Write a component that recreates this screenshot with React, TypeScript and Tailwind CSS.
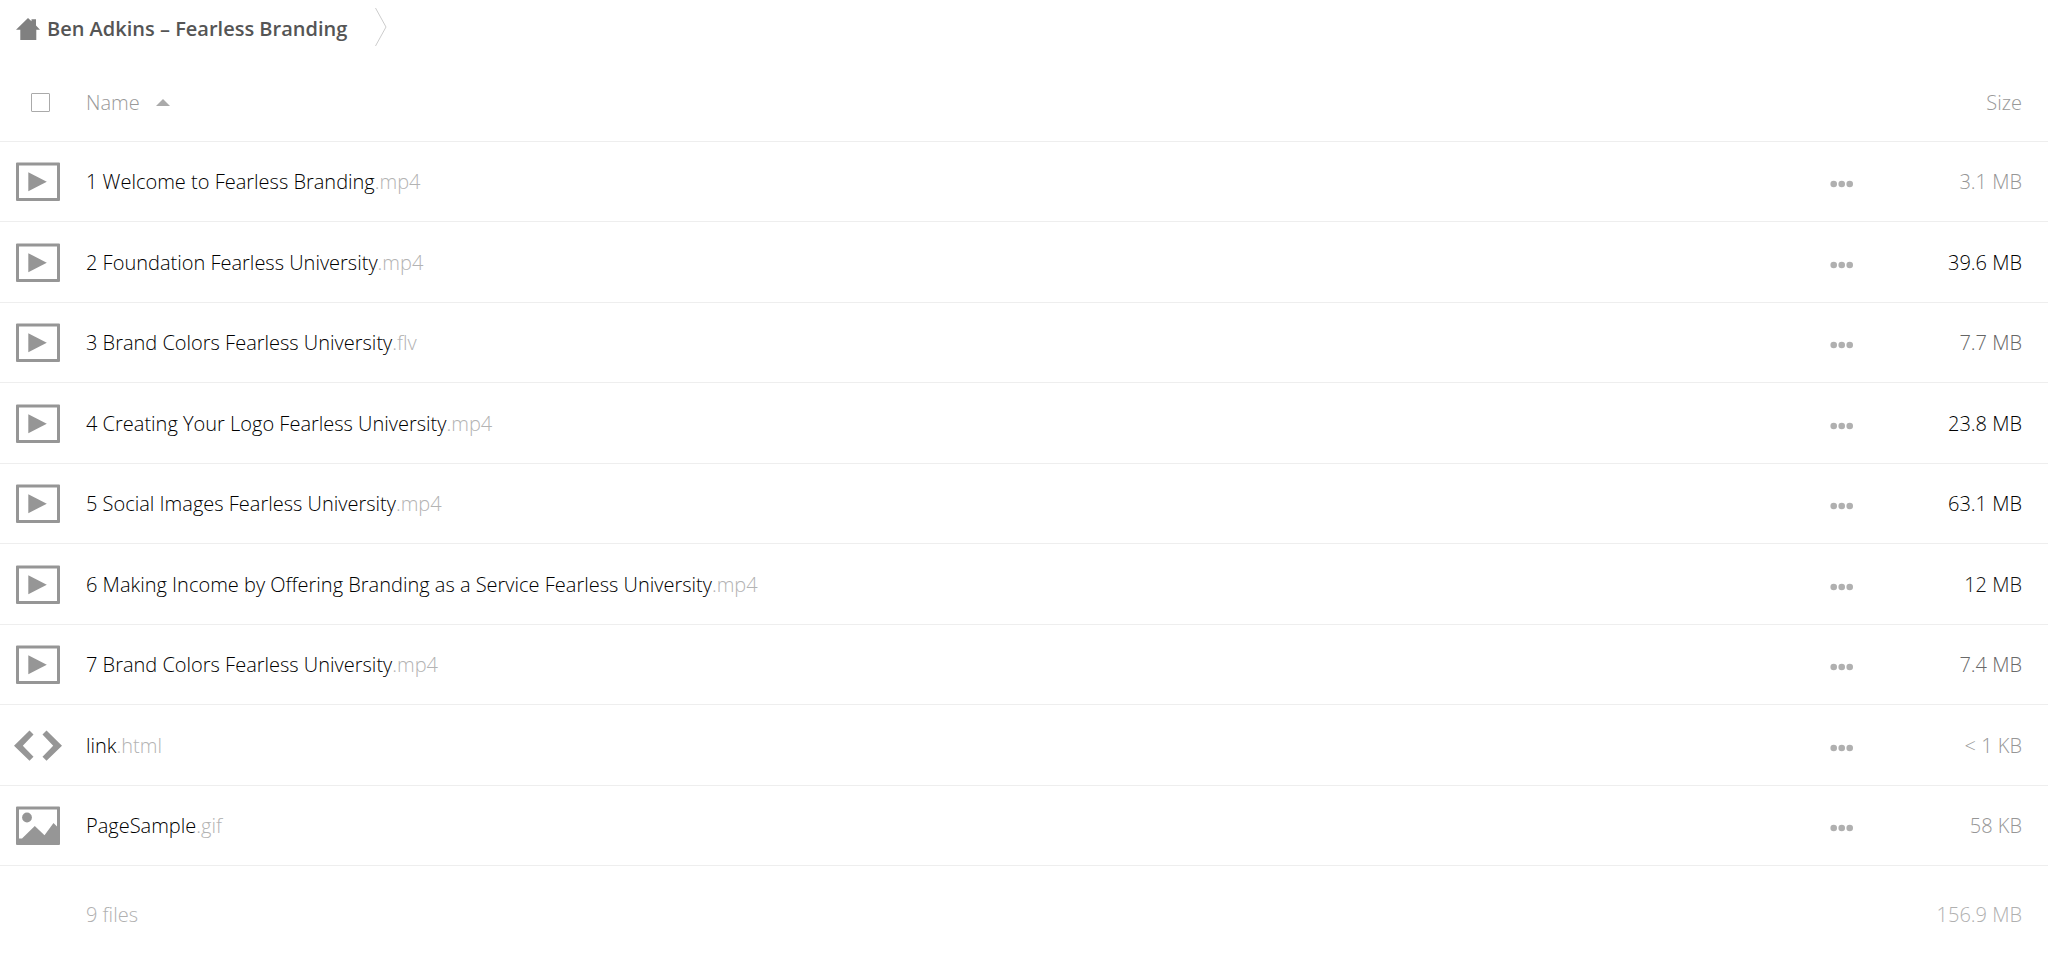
import { useState } from 'react';

type FileKind = 'video' | 'code' | 'image';

type FileEntry = {
  name: string;
  ext: string;
  size: string;
  sizeClass: string;
  kind: FileKind;
};

const files: FileEntry[] = [
  { name: '1 Welcome to Fearless Branding', ext: '.mp4', size: '3.1 MB', sizeClass: 'text-[#969696]', kind: 'video' },
  { name: '2 Foundation Fearless University', ext: '.mp4', size: '39.6 MB', sizeClass: 'text-black', kind: 'video' },
  { name: '3 Brand Colors Fearless University', ext: '.flv', size: '7.7 MB', sizeClass: 'text-[#656565]', kind: 'video' },
  { name: '4 Creating Your Logo Fearless University', ext: '.mp4', size: '23.8 MB', sizeClass: 'text-black', kind: 'video' },
  { name: '5 Social Images Fearless University', ext: '.mp4', size: '63.1 MB', sizeClass: 'text-black', kind: 'video' },
  { name: '6 Making Income by Offering Branding as a Service Fearless University', ext: '.mp4', size: '12 MB', sizeClass: 'text-[#101010]', kind: 'video' },
  { name: '7 Brand Colors Fearless University', ext: '.mp4', size: '7.4 MB', sizeClass: 'text-[#696969]', kind: 'video' },
  { name: 'link', ext: '.html', size: '< 1 KB', sizeClass: 'text-[#969696]', kind: 'code' },
  { name: 'PageSample', ext: '.gif', size: '58 KB', sizeClass: 'text-[#969696]', kind: 'image' },
];

function FileIcon({ kind }: { kind: FileKind }) {
  return (
    <svg viewBox="0 0 48 40" fill="#969696" aria-hidden="true" className="h-10 w-12">
      {kind === 'code' ? (
        <>
          <path d="M15.5 4.5 19.5 8.5 8.8 19.7 19.5 30.7 15.5 34.8 0 19.7Z" />
          <path d="M32.5 4.5 28.5 8.5 39.2 19.7 28.5 30.7 32.5 34.8 48 19.7Z" />
        </>
      ) : (
        <path
          fillRule="evenodd"
          d="M3 .5H45a1 1 0 0 1 1 1V38a1 1 0 0 1-1 1H3a1 1 0 0 1-1-1V1.5a1 1 0 0 1 1-1ZM5 3.5V36H43V3.500Z"
        />
      )}
      {kind === 'video' && <path d="M14.3 10.2 32.8 19.7 14.3 29.2Z" />}
      {kind === 'image' && (
        <>
          <circle cx="13" cy="11.5" r="4.9" />
          <path d="M4 32.5H8L20.8 20 30.5 29.2 39.5 17 44 21.5V37H4Z" />
        </>
      )}
    </svg>
  );
}

function HomeIcon() {
  return (
    <svg viewBox="0 0 24 22" fill="#808080" aria-hidden="true" className="h-[22px] w-6">
      <path d="M12 0 15.5 3.2V1.2H20V7.5L24 11.7H20.3V22H4.3V11.7H0Z" />
    </svg>
  );
}

export default function App() {
  const [selected, setSelected] = useState(false);

  return (
    <main className="w-full bg-white font-['Open_Sans',sans-serif] text-[20px] leading-7 font-light text-black">
      <nav aria-label="Breadcrumb" className="flex h-[61px] items-start pt-2 pl-4">
        <a href="#" className="flex h-[42px] items-center gap-[7px] font-semibold text-[#555]">
          <HomeIcon />
          <span>Ben Adkins – Fearless Branding</span>
        </a>
        <svg viewBox="0 0 12 38" fill="none" stroke="#ccc" aria-hidden="true" className="ml-7 h-[38px] w-3">
          <path d="M.5 0 11 19 .5 38" />
        </svg>
      </nav>

      <table className="w-full table-fixed border-collapse">
        <colgroup>
          <col className="w-[86px]" />
          <col />
          <col className="w-[60px]" />
          <col className="w-[168px]" />
        </colgroup>
        <thead>
          <tr className="h-20 border-b border-[#eee] text-[#999]">
            <th className="pt-1 pl-[31px] text-left">
              <input
                type="checkbox"
                aria-label="Select all"
                checked={selected}
                onChange={(e) => setSelected(e.target.checked)}
                className="block size-[19px] appearance-none rounded-[1px] border border-[#aaa] checked:bg-[#aaa]"
              />
            </th>
            <th className="pt-1 text-left font-light">
              <button type="button" className="flex items-center gap-4">
                <span>Name</span>
                <svg viewBox="0 0 14 7" fill="#aaa" aria-hidden="true" className="h-[7px] w-[14px]">
                  <path d="M7 0 14 7H0Z" />
                </svg>
              </button>
            </th>
            <th />
            <th className="pt-1 pr-[26px] text-right font-light">
              <button type="button">Size</button>
            </th>
          </tr>
        </thead>
        <tbody>
          {files.map((file) => (
            <tr key={file.name} className="border-b border-[#eee] odd:h-20 even:h-[81px]">
              <td className="pt-[2px] pl-[14px]">
                <FileIcon kind={file.kind} />
              </td>
              <td className="pt-[2px]">
                <a href="#">
                  {file.name}
                  <span className="text-[#b3b3b3]">{file.ext}</span>
                </a>
              </td>
              <td className="pl-[10px]">
                <button type="button" aria-label={`Actions for ${file.name}`} className="block pt-[6px]">
                  <svg viewBox="0 0 24 8" fill="#b0b0b0" aria-hidden="true" className="h-2 w-6">
                    <circle cx="3.7" cy="4" r="3.3" />
                    <circle cx="11.7" cy="4" r="3.3" />
                    <circle cx="19.7" cy="4" r="3.3" />
                  </svg>
                </button>
              </td>
              <td className={`pt-[2px] pr-[26px] text-right ${file.sizeClass}`}>{file.size}</td>
            </tr>
          ))}
        </tbody>
        <tfoot>
          <tr className="h-[95px] text-[#b0b0b0]">
            <td />
            <td className="pt-1">9 files</td>
            <td />
            <td className="pt-1 pr-[26px] text-right">156.9 MB</td>
          </tr>
        </tfoot>
      </table>
    </main>
  );
}
